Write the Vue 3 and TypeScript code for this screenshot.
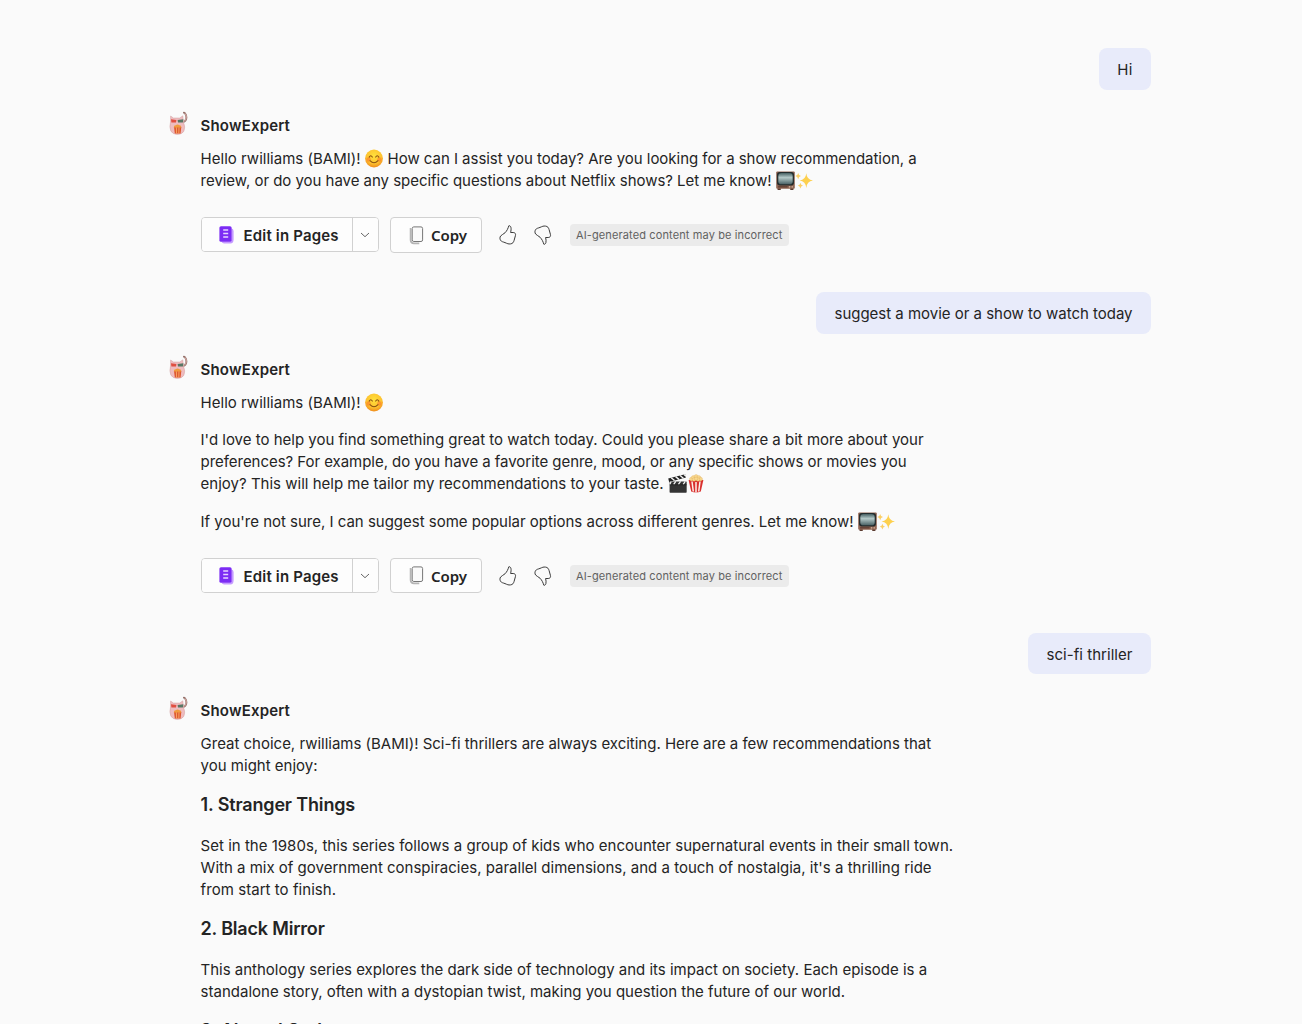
<script setup lang="ts">
import { h } from 'vue'
import type { FunctionalComponent } from 'vue'

type Piece = { t?: string; w?: number; e?: string }
type Block = { kind: 'p' | 'h'; lines: Piece[][] }
type Turn = { ask: string; askWidth: number; blocks: Block[]; actions: boolean; cls: string }

// Tracks a run of text so that it fills its measure.
const vFit = {
  mounted(el: HTMLElement, binding: { value?: number }) {
    if (!binding.value) return
    const n = (el.textContent || '').length
    const natural = el.getBoundingClientRect().width
    el.style.letterSpacing = ((binding.value - natural) / n).toFixed(4) + 'px'
  },
}

const T = (t: string, w: number): Piece => ({ t, w })
const E = (e: string): Piece => ({ e })

const turns: Turn[] = [
  {
    ask: 'Hi', askWidth: 15.2, actions: true, cls: 'first',
    blocks: [
      { kind: 'p', lines: [
        [T('Hello rwilliams (BAMI)!', 160), E('smile'), T('How can I assist you today? Are you looking for a show recommendation, a', 529)],
        [T('review, or do you have any specific questions about Netflix shows? Let me know!', 571), E('tv'), E('sparkles')],
      ] },
    ],
  },
  {
    ask: 'suggest a movie or a show to watch today', askWidth: 298, actions: true, cls: 'second',
    blocks: [
      { kind: 'p', lines: [[T('Hello rwilliams (BAMI)!', 160), E('smile')]] },
      { kind: 'p', lines: [
        [T("I'd love to help you find something great to watch today. Could you please share a bit more about your", 723)],
        [T('preferences? For example, do you have a favorite genre, mood, or any specific shows or movies you', 706)],
        [T('enjoy? This will help me tailor my recommendations to your taste.', 463), E('clapper'), E('popcorn')],
      ] },
      { kind: 'p', lines: [
        [T("If you're not sure, I can suggest some popular options across different genres. Let me know!", 653), E('tv'), E('sparkles')],
      ] },
    ],
  },
  {
    ask: 'sci-fi thriller', askWidth: 86, actions: false, cls: 'third',
    blocks: [
      { kind: 'p', lines: [
        [T('Great choice, rwilliams (BAMI)! Sci-fi thrillers are always exciting. Here are a few recommendations that', 730.5)],
        [T('you might enjoy:', 117)],
      ] },
      { kind: 'h', lines: [[T('1. Stranger Things', 154.5)]] },
      { kind: 'p', lines: [
        [T('Set in the 1980s, this series follows a group of kids who encounter supernatural events in their small town.', 752.5)],
        [T("With a mix of government conspiracies, parallel dimensions, and a touch of nostalgia, it's a thrilling ride", 731)],
        [T('from start to finish.', 135.5)],
      ] },
      { kind: 'h', lines: [[T('2. Black Mirror', 124)]] },
      { kind: 'p', lines: [
        [T('This anthology series explores the dark side of technology and its impact on society. Each episode is a', 726.5)],
        [T('standalone story, often with a dystopian twist, making you question the future of our world.', 644.5)],
      ] },
      { kind: 'h', lines: [[T('3. Altered Carbon', 149)]] },
    ],
  },
]

const s = (tag: string, a: Record<string, string | number>) => h(tag, a)
const Emoji: FunctionalComponent<{ name: string }> = (props) => {
  const parts: Record<string, () => ReturnType<typeof h>[]> = {
    smile: () => [
      h('defs', [h('radialGradient', { id: 'face', cx: '.5', cy: '.35', r: '.65' }, [
        s('stop', { offset: 0, 'stop-color': '#ffe13c' }), s('stop', { offset: 0.65, 'stop-color': '#fdc32f' }), s('stop', { offset: 1, 'stop-color': '#f08c1c' }),
      ])]),
      s('circle', { cx: 9, cy: 9, r: 8.9, fill: 'url(#face)' }),
      s('circle', { cx: 3.6, cy: 10, r: 2.2, fill: '#fb7a2d', opacity: 0.6 }),
      s('circle', { cx: 14.4, cy: 10, r: 2.2, fill: '#fb7a2d', opacity: 0.6 }),
      s('path', { d: 'M4.2 7.6Q5.8 5 7.3 7.6M10.7 7.6Q12.2 5 13.8 7.6M5 11.2Q9 15.4 13 11.2', fill: 'none', stroke: '#8a5010', 'stroke-width': 1.05, 'stroke-linecap': 'round' }),
    ],
    tv: () => [
      h('defs', [h('linearGradient', { id: 'crt', x1: 0, y1: 0, x2: 0, y2: 1 }, [
        s('stop', { offset: 0, 'stop-color': '#4a6466' }), s('stop', { offset: 0.4, 'stop-color': '#b4c9c8' }), s('stop', { offset: 1, 'stop-color': '#4a6266' }),
      ])]),
      s('path', { d: 'M1.5 16h3v2h-3zM13.5 16h3v2h-3z', fill: '#5b3b30' }),
      s('rect', { x: 0.2, y: 0.5, width: 17.6, height: 16.3, rx: 1, fill: '#8f6452' }),
      s('rect', { x: 1, y: 0.9, width: 16, height: 12.8, rx: 2.5, fill: '#242c2d' }),
      s('rect', { x: 2.2, y: 2, width: 13.6, height: 10.6, rx: 3, fill: 'url(#crt)' }),
      s('path', { d: 'M2 15h9', stroke: '#5c3c33', 'stroke-width': 1.2 }),
      s('path', { d: 'M12.3 15h1.2M14.8 15H16', stroke: '#d6b9a4', 'stroke-width': 1.2 }),
    ],
    sparkles: () => [
      s('path', { d: 'M11.3 1.8Q11.8 8.3 18 9.1Q11.8 10 11.3 16.5Q10.7 10 4.6 9.1Q10.7 8.3 11.3 1.8Z', fill: '#fdd04e' }),
      s('path', { d: 'M3.2 1.5Q3.6 4.2 6 4.6Q3.6 5 3.2 7.8Q2.7 5 .3 4.6Q2.7 4.2 3.2 1.5ZM5.4 11.2Q5.8 13.6 8 14Q5.8 14.5 5.4 17Q5 14.5 2.8 14Q5 13.6 5.4 11.2Z', fill: '#fbcf66' }),
    ],
    clapper: () => [
      s('path', { d: 'M.2 4.3L16.2.2 17 3.4 1.1 7.5Z', fill: '#222' }),
      s('path', { d: 'M3 3.6L6.2 6.2M7.2 2.5L10.4 5.1M11.4 1.4L14.6 4M15.1.5L17 2', stroke: '#f4f4f4', 'stroke-width': 1.3 }),
      s('rect', { x: 1.5, y: 7, width: 16.2, height: 10.7, rx: 0.6, fill: '#343434' }),
      s('path', { d: 'M3 7L1.7 9.9M7.4 7L5.4 9.9M11.9 7L9.9 9.9M16.4 7L14.4 9.9', stroke: '#f4f4f4', 'stroke-width': 1.2 }),
      s('path', { d: 'M1.5 10.2H17.7', stroke: '#151515', 'stroke-width': 0.5 }),
    ],
    popcorn: () => [
      s('path', { d: 'M1.6 5.6L4.2 17Q9 18.8 13.8 17L16.4 5.6Z', fill: '#d92f2e' }),
      s('path', { d: 'M5 7L6.3 17M9 7.5V18M13 7L11.7 17', stroke: '#fbeee7', 'stroke-width': 1.5 }),
      h('g', { fill: '#f8d98d', stroke: '#dfa95b', 'stroke-width': 0.35 }, [
        [4.3, 4.6, 1.8], [6.3, 3, 1.9], [9.1, 2, 1.9], [11.8, 3, 1.9], [13.7, 4.6, 1.8], [7, 5, 1.8], [11, 5, 1.8], [9.1, 4.2, 1.7],
      ].map(([cx, cy, r]) => s('circle', { cx, cy, r }))),
    ],
  }
  return h('svg', { class: 'emoji-art', width: 19, height: 19, viewBox: '0 0 18 18' }, parts[props.name]())
}
Emoji.props = ['name']
</script>

<template>
  <main class="chat">
    <section v-for="turn in turns" :key="turn.ask" class="turn" :class="turn.cls">
      <div class="ask"><span v-fit="turn.askWidth" class="run">{{ turn.ask }}</span></div>
      <article class="reply">
        <svg class="avatar" width="22" height="26" viewBox="0 0 22 26">
          <path d="M14.8 11.2Q18.4 9.8 18.4 6.4Q18.3 3.6 17.2 2.6Q16.7 1.9 15.9 1.7" fill="none" stroke="#94716a" stroke-width="1.9" stroke-linecap="round" />
          <path d="M14.8 11.2Q18.4 9.8 18.4 6.4Q18.3 3.6 17.2 2.6" fill="none" stroke="#d8aaa5" stroke-width="1" stroke-linecap="round" />
          <path d="M2.6 5L5.4 7H11.7L14.8 4.8 15.4 11Q17.8 16.4 15.8 20.4Q13.8 23.4 9.4 23.4Q4.6 23.4 2.8 20Q1.2 16.4 2.5 11Z" fill="#eebcbf" stroke="#d0a0a0" stroke-width=".5" />
          <path d="M3 8.2L8.4 8.9 8 11.6H3.4Z" fill="#e04f41" />
          <path d="M9.6 8.9L15.4 8.2 14.9 11.6H10Z" fill="#577765" />
          <path d="M6 15.9H13.3L12.6 22.6H6.8Z" fill="#e0582f" />
          <path d="M8.4 16.2L8.6 22.5M11 16.2L10.8 22.5" stroke="#f5ad6b" stroke-width=".9" />
          <path d="M5.8 16.4Q5.7 14.2 7.6 14.2Q9.6 12.6 11.5 14.2Q13.4 14.2 13.4 16.4Z" fill="#f09a3c" />
        </svg>
        <div class="content">
          <div class="name"><span v-fit="89.5" class="run">ShowExpert</span></div>
          <div v-for="(block, bi) in turn.blocks" :key="bi" :class="block.kind === 'h' ? 'heading' : 'para'">
            <div v-for="(line, li) in block.lines" :key="li" class="line">
              <template v-for="(piece, pi) in line" :key="pi">
                <span v-if="piece.t" v-fit="piece.w" class="run">{{ piece.t }}</span>
                <span v-else class="emoji" :class="piece.e"><Emoji :name="piece.e!" /></span>
              </template>
            </div>
          </div>
          <div v-if="turn.actions" class="actions">
            <div class="split">
              <button class="edit">
                <svg width="16" height="18" viewBox="0 0 16 18">
                  <path d="M12.2 2.2Q14.6 2.6 14.6 5V13.5Q14.6 17.4 11.3 17.4H5Q2.8 17.4 2.4 15.6H12.2Z" fill="#c59bff" />
                  <rect x=".4" y=".2" width="12.2" height="15.6" rx="1.6" fill="#7c2cf4" />
                  <path d="M4.2 4H9.2M4.2 7.5H9.2M4.2 11H9.2" stroke="#e7d5ff" stroke-width="1.3" />
                </svg>
                <span v-fit="95.2" class="run">Edit in Pages</span>
              </button>
              <button class="more">
                <svg width="10" height="6" viewBox="0 0 10 6"><path d="M1 1L5 4.7 9 1" fill="none" stroke="#666" stroke-width="1" /></svg>
              </button>
            </div>
            <button class="copy">
              <svg width="15" height="19" viewBox="0 0 15 19">
                <path d="M2.2 2.8H1.6V14Q1.6 17.3 4.8 17.3H10.3" fill="none" stroke="#b5b5b5" stroke-width="1.7" />
                <rect x="3.2" y=".9" width="10.4" height="14.6" rx="1.6" fill="#fafafa" stroke="#777" />
              </svg>
              <span v-fit="36" class="run">Copy</span>
            </button>
            <svg class="thumb up" width="18" height="20" viewBox="0 0 18 20">
              <path d="M9.8.8C9 3.6 8 5.7 6 7.8C4.5 9.3 2.6 9.6 1.6 11C.7 12.4.8 14 1.5 15.2C2.4 16.8 4.4 16.9 6 17.6C8.5 18.6 9.3 19.2 11.5 18.9C13.7 18.6 14.5 17.4 15.1 15.4L16.4 10.7C17 8.7 15.9 7.5 14.2 7.5H11.6C12 5.6 12.3 4 11.9 2.3C11.5 1 10.7.5 9.8.8Z" fill="none" stroke="#3b3b3b" stroke-width="1" stroke-linejoin="round" />
            </svg>
            <svg class="thumb down" width="18" height="20" viewBox="0 0 18 20">
              <path d="M9.8.8C9 3.6 8 5.7 6 7.8C4.5 9.3 2.6 9.6 1.6 11C.7 12.4.8 14 1.5 15.2C2.4 16.8 4.4 16.9 6 17.6C8.5 18.6 9.3 19.2 11.5 18.9C13.7 18.6 14.5 17.4 15.1 15.4L16.4 10.7C17 8.7 15.9 7.5 14.2 7.5H11.6C12 5.6 12.3 4 11.9 2.3C11.5 1 10.7.5 9.8.8Z" transform="translate(0 20) scale(1 -1)" fill="none" stroke="#3b3b3b" stroke-width="1" stroke-linejoin="round" />
            </svg>
            <div class="notice"><span v-fit="206.5" class="run">AI-generated content may be incorrect</span></div>
          </div>
        </div>
      </article>
    </section>
  </main>
</template>

<style>
html, body { margin: 0; background: #fafafa; overflow: hidden; }
</style>

<style scoped>
.chat {
  box-sizing: border-box;
  width: 1302px;
  height: 1024px;
  overflow: hidden;
  padding: 48px 151px 0 168px;
  background: #fafafa;
  color: #242424;
  font-family: Inter, "Liberation Sans", sans-serif;
  font-size: 15px;
  line-height: 22px;
}
.turn { display: flex; flex-direction: column; }
.first { height: 244px; }
.second { height: 341px; }
.ask {
  align-self: flex-end;
  box-sizing: border-box;
  height: 42px;
  padding: 10.5px 18.5px 0 18.5px;
  border-radius: 8px;
  background: #e8ebfa;
  white-space: nowrap;
}
.third .ask { height: 41px; margin-bottom: 1px; }
.run { display: inline-block; white-space: pre; }
.reply { display: flex; margin-top: 20px; }
.avatar { flex: none; margin-top: 1px; }
.content { margin-left: 10.6px; }
.name { height: 22px; margin-top: 5px; font-weight: 600; }
.name + .para { margin-top: 11px; }
.para { margin-top: 15px; }
.para + .para + .para { margin-top: 16px; }
.line { display: flex; height: 22px; white-space: nowrap; }
.heading { margin-top: 17px; font-size: 18px; font-weight: 600; }
.heading + .para { margin-top: 19px; }
.emoji { display: flex; width: 18px; padding-top: 1px; }
.emoji.smile { margin: 0 4.5px 0 4.5px; }
.emoji.tv { margin-left: 4px; width: 19px; }
.emoji.clapper { margin-left: 4px; width: 19px; }
.actions { display: flex; align-items: flex-start; margin: 25px 0 0 .4px; }
button {
  box-sizing: border-box;
  padding: 0;
  background: #fdfdfd;
  color: #242424;
  font: 600 15px/22px Inter, "Liberation Sans", sans-serif;
  display: flex;
  align-items: center;
}
.split { display: flex; box-sizing: border-box; width: 178px; height: 35px; border: 1px solid #d1d1d1; border-radius: 4px; background: #fdfdfd; overflow: hidden; }
.edit { width: 150px; border: 0; padding-left: 17px; }
.edit .run { margin-left: 8.6px; padding-top: 2px; }
.more { width: 26px; border: 0; border-left: 1px solid #d1d1d1; justify-content: center; }
.copy { width: 92px; height: 36px; margin-left: 11px; padding-left: 18px; border: 1px solid #d1d1d1; border-radius: 4px; font-family: "Noto Sans", "Open Sans", sans-serif; }
.second .copy { height: 35px; }
.copy .run { margin-left: 7px; padding-top: 0; }
.thumb { margin: 8px 0 0 17px; }
.notice { box-sizing: border-box; height: 22px; width: 219px; margin: 7px 0 0 18px; padding-left: 6px; border-radius: 4px; background: #ebebeb; color: #616161; font-size: 11px; line-height: 22px; }
</style>
